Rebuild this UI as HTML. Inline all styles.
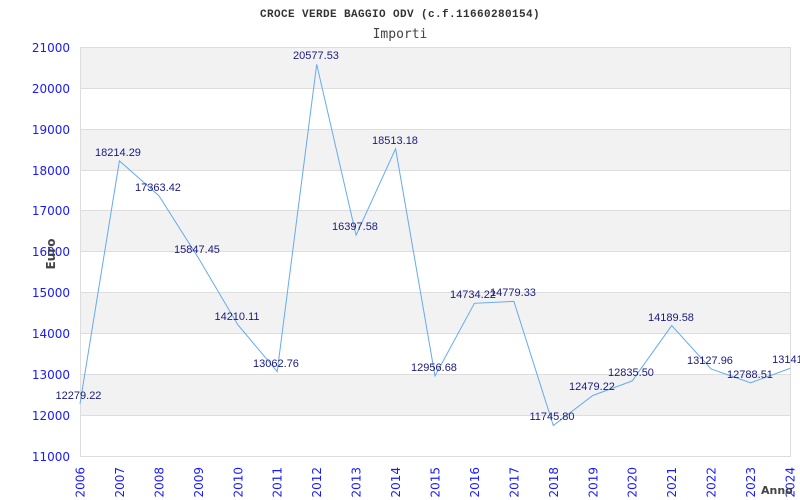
<!DOCTYPE html>
<html><head><meta charset="utf-8"><style>html,body{margin:0;padding:0;background:#fff;width:800px;height:500px;overflow:hidden}</style></head><body>
<svg width="800" height="500" xmlns="http://www.w3.org/2000/svg">
<rect x="0" y="0" width="800" height="500" fill="#fff"/>
<g fill="#f2f2f2">
<rect x="80" y="47" width="710" height="41"/>
<rect x="80" y="129" width="710" height="41"/>
<rect x="80" y="211" width="710" height="40"/>
<rect x="80" y="292" width="710" height="41"/>
<rect x="80" y="374" width="710" height="41"/>
</g>
<g stroke="#dddddd" stroke-width="1">
<line x1="80" y1="47.5" x2="790" y2="47.5"/>
<line x1="80" y1="88.5" x2="790" y2="88.5"/>
<line x1="80" y1="129.5" x2="790" y2="129.5"/>
<line x1="80" y1="170.5" x2="790" y2="170.5"/>
<line x1="80" y1="210.5" x2="790" y2="210.5"/>
<line x1="80" y1="251.5" x2="790" y2="251.5"/>
<line x1="80" y1="292.5" x2="790" y2="292.5"/>
<line x1="80" y1="333.5" x2="790" y2="333.5"/>
<line x1="80" y1="374.5" x2="790" y2="374.5"/>
<line x1="80" y1="415.5" x2="790" y2="415.5"/>
<line x1="80" y1="456.5" x2="790" y2="456.5"/>
<line x1="80.5" y1="47" x2="80.5" y2="457"/>
<line x1="790.5" y1="47" x2="790.5" y2="457"/>
</g>
<text x="400" y="17" text-anchor="middle" font-family="Liberation Mono, monospace" font-weight="bold" font-size="11" letter-spacing="0.4" fill="#333">CROCE VERDE BAGGIO ODV (c.f.11660280154)</text>
<text x="400" y="38" text-anchor="middle" font-family="DejaVu Sans Mono, monospace" font-size="13" fill="#444">Importi</text>
<g font-family="DejaVu Sans, sans-serif" font-size="12" fill="#1a1aff" text-anchor="end">
<text x="70" y="52">21000</text><text x="70" y="93">20000</text><text x="70" y="134">19000</text><text x="70" y="175">18000</text><text x="70" y="215">17000</text><text x="70" y="256">16000</text><text x="70" y="297">15000</text><text x="70" y="338">14000</text><text x="70" y="379">13000</text><text x="70" y="420">12000</text><text x="70" y="461">11000</text>
</g>
<text transform="translate(55,254) rotate(-90)" text-anchor="middle" font-family="DejaVu Sans, sans-serif" font-size="12" font-weight="bold" fill="#444">Euro</text>
<g font-family="DejaVu Sans, sans-serif" font-size="12" fill="#1a1aff" text-anchor="end">
<text transform="translate(84.5,467) rotate(-90)">2006</text>
<text transform="translate(123.9,467) rotate(-90)">2007</text>
<text transform="translate(163.4,467) rotate(-90)">2008</text>
<text transform="translate(202.8,467) rotate(-90)">2009</text>
<text transform="translate(242.3,467) rotate(-90)">2010</text>
<text transform="translate(281.7,467) rotate(-90)">2011</text>
<text transform="translate(321.2,467) rotate(-90)">2012</text>
<text transform="translate(360.6,467) rotate(-90)">2013</text>
<text transform="translate(400.1,467) rotate(-90)">2014</text>
<text transform="translate(439.5,467) rotate(-90)">2015</text>
<text transform="translate(478.9,467) rotate(-90)">2016</text>
<text transform="translate(518.4,467) rotate(-90)">2017</text>
<text transform="translate(557.8,467) rotate(-90)">2018</text>
<text transform="translate(597.3,467) rotate(-90)">2019</text>
<text transform="translate(636.7,467) rotate(-90)">2020</text>
<text transform="translate(676.2,467) rotate(-90)">2021</text>
<text transform="translate(715.6,467) rotate(-90)">2022</text>
<text transform="translate(755.1,467) rotate(-90)">2023</text>
<text transform="translate(794.5,467) rotate(-90)">2024</text>
</g>
<text x="761" y="494" font-family="DejaVu Sans, sans-serif" font-size="11" font-weight="bold" fill="#444">Anno</text>
<polyline fill="none" stroke="#66aaee" stroke-width="1" points="80,403.7 119.4,160.9 158.9,195.7 198.3,257.8 237.8,324.7 277.2,371.6 316.7,64.3 356.1,235.2 395.6,148.7 435,376 474.4,303.3 513.9,301.4 553.3,425.5 592.8,395.5 632.2,380.9 671.7,325.6 711.1,369 750.6,382.8 790,368.4"/>
<g font-family="Liberation Sans, Arial, sans-serif" font-size="11" fill="#1a1a80" text-anchor="middle">
<text x="78.5" y="399">12279.22</text>
<text x="118" y="156">18214.29</text>
<text x="158" y="191">17363.42</text>
<text x="197" y="253">15847.45</text>
<text x="237" y="320">14210.11</text>
<text x="276" y="367">13062.76</text>
<text x="316" y="59">20577.53</text>
<text x="355" y="230">16397.58</text>
<text x="395" y="144">18513.18</text>
<text x="434" y="371">12956.68</text>
<text x="473" y="298">14734.22</text>
<text x="513" y="296">14779.33</text>
<text x="552" y="420">11745.80</text>
<text x="592" y="390">12479.22</text>
<text x="631" y="376">12835.50</text>
<text x="671" y="321">14189.58</text>
<text x="710" y="364">13127.96</text>
<text x="750" y="378">12788.51</text>
<text x="789" y="363">13141.</text>
</g>
</svg>
</body></html>
